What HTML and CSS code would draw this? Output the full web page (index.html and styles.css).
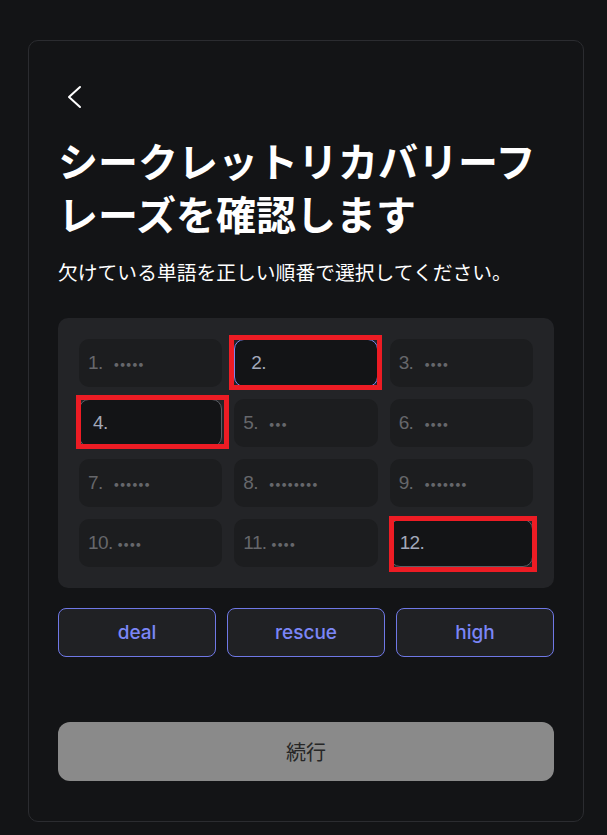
FILE: index.html
```html
<!DOCTYPE html>
<html lang="ja">
<head>
<meta charset="utf-8">
<title>シークレットリカバリーフレーズを確認します</title>
<link rel="stylesheet" href="styles.css">
</head>
<body>
<main class="card">
  <button class="back" aria-label="戻る">
    <svg width="24" height="24" viewBox="0 0 24 24" fill="none"><path d="M22 2 L11 12 L22 22" stroke="#ffffff" stroke-width="2" stroke-linecap="round" stroke-linejoin="round"/></svg>
  </button>
  <h1 class="title">シークレットリカバリーフレーズを確認します</h1>
  <p class="subtitle">欠けている単語を正しい順番で選択してください。</p>

  <section class="panel">
    <div class="cell"><span class="num">1.</span><span class="mask">•••••</span></div>
    <div class="cell slot slot-active"><span class="num">2.</span><span class="mark mark-2"></span></div>
    <div class="cell"><span class="num">3.</span><span class="mask">••••</span></div>
    <div class="cell slot slot-4"><span class="num">4.</span><span class="mark mark-4"></span></div>
    <div class="cell"><span class="num">5.</span><span class="mask">•••</span></div>
    <div class="cell"><span class="num">6.</span><span class="mask">••••</span></div>
    <div class="cell"><span class="num">7.</span><span class="mask">••••••</span></div>
    <div class="cell"><span class="num">8.</span><span class="mask">••••••••</span></div>
    <div class="cell"><span class="num">9.</span><span class="mask">•••••••</span></div>
    <div class="cell"><span class="num">10.</span><span class="mask">••••</span></div>
    <div class="cell"><span class="num">11.</span><span class="mask">••••</span></div>
    <div class="cell slot slot-12"><span class="num">12.</span><span class="mark mark-12"></span></div>
  </section>

  <div class="words">
    <button class="word">deal</button>
    <button class="word">rescue</button>
    <button class="word">high</button>
  </div>

  <button class="continue">続行</button>
</main>
</body>
</html>
```
FILE: styles.css
```css
* { box-sizing: border-box; }

html, body {
  margin: 0;
  padding: 0;
  background: #131416;
}

body {
  padding: 40px 0 0 28px;
  font-family: Inter, "Noto Sans CJK JP", sans-serif;
  color: #ffffff;
}

.card {
  width: 556px;
  height: 782px;
  border: 1px solid #2b2c30;
  border-radius: 10px;
  padding: 44px 29px 0 29px;
  display: flex;
  flex-direction: column;
}

.back {
  width: 24px;
  height: 24px;
  padding: 0;
  margin: 0;
  border: 0;
  background: none;
  display: block;
}
.back svg { display: block; }

.title {
  margin: 25px 0 0 0;
  font-family: "Noto Sans CJK JP", sans-serif;
  font-size: 40px;
  line-height: 53px;
  font-weight: 700;
  color: #ffffff;
}

.subtitle {
  margin: 18px 0 0 0;
  font-family: "Noto Sans CJK JP", sans-serif;
  font-size: 19.8px;
  line-height: 28px;
  color: #ffffff;
}

.panel {
  margin-top: 32px;
  background: #232427;
  border-radius: 10px;
  padding: 21px 21px;
  display: grid;
  grid-template-columns: repeat(3, 1fr);
  grid-auto-rows: 48px;
  gap: 12px;
}

.cell {
  position: relative;
  background: #1c1d1f;
  border-radius: 10px;
  display: flex;
  align-items: center;
  padding-left: 9px;
  font-family: "Liberation Sans", Arial, sans-serif;
  font-size: 19px;
  letter-spacing: -0.6px;
  color: #66676b;
}

.num {
  min-width: 21px;
}

.mask {
  font-family: Inter, sans-serif;
  font-size: 12px;
  letter-spacing: -0.6px;
  color: #66676b;
  margin-left: 4px;
}

.slot {
  background: #131416;
  color: #a3a9ba;
  border: 1px solid #5c5f66;
}
.slot-active {
  border-color: #7d86f0;
  padding-left: 16px;
}
.slot-4 { padding-left: 13px; }
.slot-12 { padding-left: 9px; }

.mark {
  position: absolute;
  border: 5px solid #ed1c24;
  pointer-events: none;
}
.mark-2 { left: -6px; right: -5px; top: -5px; bottom: -4px; }
.mark-4 { left: -4px; right: -8px; top: -5px; bottom: -3px; }
.mark-12 { left: -2px; right: -5px; top: -4px; bottom: -6px; }

.words {
  margin-top: 20px;
  display: grid;
  grid-template-columns: repeat(3, 1fr);
  gap: 11px;
}

.word {
  height: 49px;
  background: #202124;
  border: 1px solid #6f78e6;
  border-radius: 8px;
  color: #7b86f7;
  font-family: Inter, sans-serif;
  font-size: 19px;
  font-weight: 500;
  padding: 0;
}

.continue {
  margin-top: 65px;
  height: 59px;
  border: 0;
  border-radius: 12px;
  background: #8a8a8a;
  color: #262626;
  font-family: "Noto Sans CJK JP", sans-serif;
  font-size: 20px;
  padding: 0;
}
```
